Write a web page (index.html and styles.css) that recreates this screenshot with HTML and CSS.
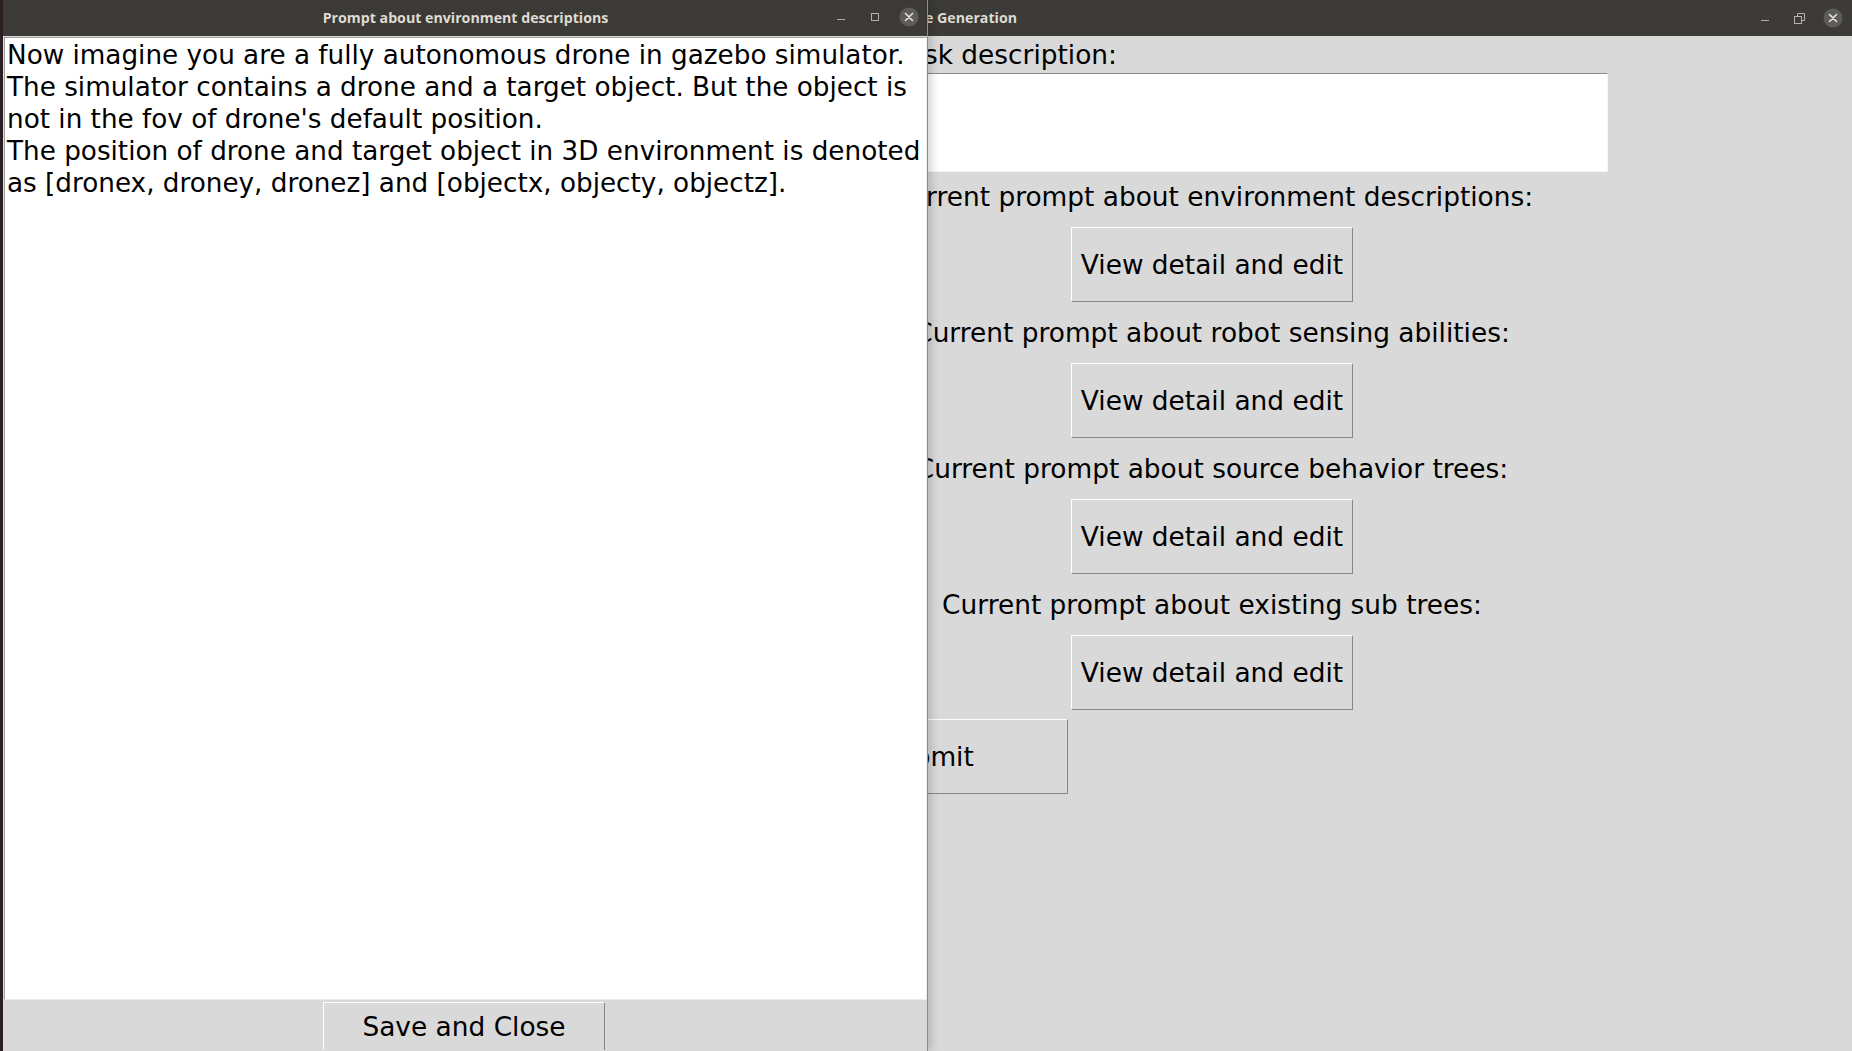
FILE: index.html
```html
<!DOCTYPE html>
<html lang="en">
<head>
<meta charset="utf-8">
<title>Prompt about environment descriptions</title>
<link rel="stylesheet" href="styles.css">
</head>
<body>
<div class="desktop">

  <div class="window main-win">
    <div class="titlebar">
      <span class="title title-right">Behavior Tree Generation</span>
      <span class="spacer"></span>
      <div class="controls">
        <span class="ctl"><svg width="20" height="20" viewBox="0 0 20 20"><line x1="6" y1="12.5" x2="14" y2="12.5" stroke="#b3b0a8" stroke-width="1"/></svg></span>
        <span class="ctl"><svg width="20" height="20" viewBox="0 0 20 20"><rect x="5.5" y="8.5" width="7" height="7" fill="none" stroke="#b3b0a8" stroke-width="1"/><path d="M8.5 8.5 V5.5 H15.5 V12.5 H12.5" fill="none" stroke="#b3b0a8" stroke-width="1"/></svg></span>
        <span class="ctl"><svg width="20" height="20" viewBox="0 0 20 20"><circle cx="10" cy="10" r="9.5" fill="#5d5c58"/><path d="M6.5 6.5 L13.5 13.5 M13.5 6.5 L6.5 13.5" stroke="#e6e4df" stroke-width="1.6" stroke-linecap="round"/></svg></span>
      </div>
    </div>
    <div class="main-body">
      <div class="label label-task">Task description:</div>
      <div class="entry"></div>
      <div class="label label-center first">Current prompt about environment descriptions:</div>
      <button class="tkbtn center">View detail and edit</button>
      <div class="label label-center">Current prompt about robot sensing abilities:</div>
      <button class="tkbtn center">View detail and edit</button>
      <div class="label label-center">Current prompt about source behavior trees:</div>
      <button class="tkbtn center">View detail and edit</button>
      <div class="label label-center">Current prompt about existing sub trees:</div>
      <button class="tkbtn center">View detail and edit</button>
      <button class="tkbtn submit">Submit</button>
    </div>
  </div>

  <div class="window prompt-win">
    <div class="titlebar">
      <span class="title title-center">Prompt about environment descriptions</span>
      <div class="controls abs-controls">
        <span class="ctl"><svg width="20" height="20" viewBox="0 0 20 20"><line x1="6" y1="12.5" x2="14" y2="12.5" stroke="#b3b0a8" stroke-width="1"/></svg></span>
        <span class="ctl"><svg width="20" height="20" viewBox="0 0 20 20"><rect x="6.5" y="6.5" width="7" height="7" fill="none" stroke="#b3b0a8" stroke-width="1"/></svg></span>
        <span class="ctl"><svg width="20" height="20" viewBox="0 0 20 20"><circle cx="10" cy="10" r="9.5" fill="#5d5c58"/><path d="M6.5 6.5 L13.5 13.5 M13.5 6.5 L6.5 13.5" stroke="#e6e4df" stroke-width="1.6" stroke-linecap="round"/></svg></span>
      </div>
    </div>
    <div class="prompt-body">
      <div class="textarea">Now imagine you are a fully autonomous drone in gazebo simulator.<br>The simulator contains a drone and a target object. But the object is<br>not in the fov of drone's default position.<br>The position of drone and target object in 3D environment is denoted<br>as [dronex, droney, dronez] and [objectx, objecty, objectz].</div>
      <div class="footer">
        <button class="tkbtn save">Save and Close</button>
      </div>
    </div>
  </div>

</div>
</body>
</html>
```

FILE: styles.css
```css
* { box-sizing: border-box; }

html, body {
  margin: 0;
  padding: 0;
}

body {
  width: 1852px;
  height: 1051px;
  overflow: hidden;
  background: #2d2026;
  font-family: "DejaVu Sans", sans-serif;
}

.desktop {
  position: relative;
  width: 1852px;
  height: 1051px;
}

.window {
  position: absolute;
  top: 0;
  display: flex;
  flex-direction: column;
  background: #d9d9d9;
}

.main-win {
  left: 572px;
  right: 0;
  bottom: 0;
  z-index: 1;
}

.prompt-win {
  left: 3px;
  width: 925px;
  height: 1051px;
  z-index: 2;
  border-right: 1px solid #8d8d8d;
  box-shadow: 3px 0 9px rgba(0, 0, 0, 0.18);
}

.titlebar {
  position: relative;
  height: 36px;
  flex: none;
  display: flex;
  align-items: center;
  background: #3c3b37;
  color: #dfdbd2;
}

.prompt-win .titlebar {
  background: #3b3a36;
  justify-content: center;
}

.title {
  font-family: "Open Sans", "DejaVu Sans", sans-serif;
  font-weight: 700;
  font-size: 14.2px;
  line-height: 36px;
  white-space: nowrap;
}

.title-center {
  padding-left: 1px;
}

.title-right {
  width: 445px;
  text-align: right;
}

.spacer { flex: 1; }

.controls {
  display: flex;
  gap: 14px;
  padding-right: 9px;
  align-items: center;
}

.abs-controls {
  position: absolute;
  right: 8px;
  top: 7px;
  padding-right: 0;
}

.ctl {
  width: 20px;
  height: 20px;
  display: block;
}

.ctl svg { display: block; }

/* main window body */
.main-body {
  flex: 1;
  display: flex;
  flex-direction: column;
  align-items: flex-start;
  padding-top: 3px;
  font-size: 26.4px;
  line-height: 32px;
  color: #000;
}

.label {
  white-space: nowrap;
  height: 32px;
}

.label-task {
  margin-left: 324px;
}

.entry {
  margin-left: 324px;
  margin-top: 2px;
  width: 712px;
  height: 99px;
  background: #fff;
  border-top: 1px solid #8a8a8a;
  border-left: 1px solid #8a8a8a;
  border-bottom: 1px solid #f4f4f4;
  border-right: 1px solid #f4f4f4;
}

.label-center {
  align-self: center;
  margin-top: 15px;
}

.label-center.first {
  margin-top: 9px;
}

.tkbtn {
  font-family: "DejaVu Sans", sans-serif;
  font-size: 26.4px;
  line-height: 32px;
  color: #000;
  background: #d9d9d9;
  width: 282px;
  height: 75px;
  padding: 0 8px;
  margin: 0;
  border-top: 1px solid #ffffff;
  border-left: 1px solid #ffffff;
  border-bottom: 1px solid #888888;
  border-right: 1px solid #888888;
  border-radius: 0;
  text-align: center;
  white-space: nowrap;
}

.tkbtn.center {
  align-self: center;
  margin-top: 14px;
}

.tkbtn.submit {
  margin-left: 214px;
  margin-top: 9px;
}

/* prompt window */
.prompt-body {
  flex: 1;
  display: flex;
  flex-direction: column;
  padding: 1px 0 0 1px;
  background: #d9d9d9;
}

.textarea {
  flex: 1;
  background: #fff;
  border-top: 1px solid #a3a3a3;
  border-left: 1px solid #a3a3a3;
  border-bottom: 1px solid #ececec;
  border-right: 1px solid #ececec;
  padding: 1px 0 0 2px;
  font-size: 26.25px;
  line-height: 32px;
  color: #000;
  white-space: nowrap;
  overflow: hidden;
}

.footer {
  height: 51px;
  flex: none;
  display: flex;
  justify-content: center;
  align-items: flex-start;
  padding-top: 2px;
}

.tkbtn.save {
  height: 48px;
  padding: 7px 8px;
  border-bottom: none;
  margin-right: 3px;
}
```
